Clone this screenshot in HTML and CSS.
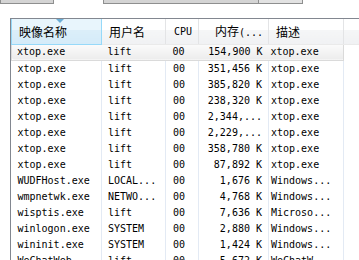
FILE: index.html
```html
<!DOCTYPE html>
<html lang="zh-CN">
<head>
    <meta charset="UTF-8">
    <title>任务管理器 - 进程</title>
    <link rel="stylesheet" href="styles.css">
</head>
<body>

    <div class="tabs">
        <span class="tab t1"></span>
        <span class="space s1"></span>
        <span class="tab t2"></span>
        <span class="tab t3"></span>
    </div>

    <div class="list">
        <table>
            <colgroup>
                <col class="c1"><col class="c2"><col class="c3"><col class="c4"><col class="c5"><col>
            </colgroup>
            <thead>
                <tr>
                    <th class="sorted"><span class="arrow"></span>映像名称</th>
                    <th>用户名</th>
                    <th class="mono cpu">CPU</th>
                    <th class="mem">内存<span class="mono">(...</span></th>
                    <th class="desc">描述</th>
                    <th class="fill"></th>
                </tr>
            </thead>
            <tbody>
                <tr class="sel"><td>xtop.exe</td><td>lift</td><td>00</td><td class="num">154,900 K</td><td class="last">xtop.exe</td><td class="fill"></td></tr>
                <tr><td>xtop.exe</td><td>lift</td><td>00</td><td class="num">351,456 K</td><td>xtop.exe</td><td class="fill"></td></tr>
                <tr><td>xtop.exe</td><td>lift</td><td>00</td><td class="num">385,820 K</td><td>xtop.exe</td><td class="fill"></td></tr>
                <tr><td>xtop.exe</td><td>lift</td><td>00</td><td class="num">238,320 K</td><td>xtop.exe</td><td class="fill"></td></tr>
                <tr><td>xtop.exe</td><td>lift</td><td>00</td><td class="num">2,344,...</td><td>xtop.exe</td><td class="fill"></td></tr>
                <tr><td>xtop.exe</td><td>lift</td><td>00</td><td class="num">2,229,...</td><td>xtop.exe</td><td class="fill"></td></tr>
                <tr><td>xtop.exe</td><td>lift</td><td>00</td><td class="num">358,780 K</td><td>xtop.exe</td><td class="fill"></td></tr>
                <tr><td>xtop.exe</td><td>lift</td><td>00</td><td class="num">87,892 K</td><td>xtop.exe</td><td class="fill"></td></tr>
                <tr><td>WUDFHost.exe</td><td>LOCAL...</td><td>00</td><td class="num">1,676 K</td><td>Windows...</td><td class="fill"></td></tr>
                <tr><td>wmpnetwk.exe</td><td>NETWO...</td><td>00</td><td class="num">4,768 K</td><td>Windows...</td><td class="fill"></td></tr>
                <tr><td>wisptis.exe</td><td>lift</td><td>00</td><td class="num">7,636 K</td><td>Microso...</td><td class="fill"></td></tr>
                <tr><td>winlogon.exe</td><td>SYSTEM</td><td>00</td><td class="num">2,880 K</td><td>Windows...</td><td class="fill"></td></tr>
                <tr><td>wininit.exe</td><td>SYSTEM</td><td>00</td><td class="num">1,424 K</td><td>Windows...</td><td class="fill"></td></tr>
                <tr><td>WeChatWeb...</td><td>lift</td><td>00</td><td class="num">5,672 K</td><td>WeChatW...</td><td class="fill"></td></tr>
            </tbody>
        </table>
    </div>

</body>
</html>
```

FILE: styles.css
```css
*{
    padding: 0;
    margin: 0;
    box-sizing: border-box;
}
body{
    background: #fff;
    width: 359px;
    height: 260px;
    overflow: hidden;
    font-family: "DejaVu Sans Mono", "Noto Sans CJK SC", monospace;
    font-size: 10px;
    color: #000;
}

/*上方按钮的底边*/
.tabs{
    display: flex;
    height: 4px;
}
.tab{
    display: block;
    height: 4px;
    background: #d4d4d4;
    border: 1px solid #8e8f8f;
    border-top: none;
}
.t1{
    width: 54px;
}
.s1{
    width: 49px;
}
.t2{
    width: 156px;
}
.t3{
    width: 45px;
    margin-left: -1px;
    background: #e2e2e2;
}

.list{
    margin: 14px 0 0 10px;
    border-top: 1px solid #828790;
    border-left: 1px solid #828790;
    height: 242px;
    overflow: hidden;
}
table{
    table-layout: fixed;
    border-collapse: collapse;
    width: 349px;
}
.c1{ width: 90px; }
.c2{ width: 64px; }
.c3{ width: 33px; }
.c4{ width: 70px; }
.c5{ width: 75px; }

th{
    height: 25px;
    font-family: "Noto Sans CJK SC", sans-serif;
    font-size: 12px;
    font-weight: normal;
    line-height: 14px;
    text-align: left;
    padding: 1px 0 0 7px;
    background: linear-gradient(#ffffff 0, #ffffff 45%, #f5f6f7 46%, #f0f1f3 100%);
    border-right: 1px solid #e3e4e6;
    border-bottom: 1px solid #eaeaea;
    white-space: nowrap;
    overflow: hidden;
    position: relative;
}
th.sorted{
    background: linear-gradient(#e8f5fc 0, #e8f5fc 45%, #dbeef9 46%, #d4ebf8 100%);
    border: 1px solid #96d9f9;
    border-top: none;
}
.arrow{
    position: absolute;
    top: 0;
    left: 44px;
    width: 0;
    height: 0;
    border-left: 4px solid transparent;
    border-right: 4px solid transparent;
    border-top: 4px solid #6caed6;
}
th.mono{
    font-family: "DejaVu Sans Mono", monospace;
    font-size: 10px;
    padding-left: 8px;
}
th.mem{
    padding-left: 16px;
}
th .mono{
    font-family: "DejaVu Sans Mono", monospace;
    font-size: 10px;
}
th.desc{
    padding-left: 7px;
}
th.fill{
    border-right: none;
}

td{
    height: 16px;
    line-height: 16px;
    padding: 0 0 0 6px;
    white-space: nowrap;
    overflow: hidden;
    border-right: 1px solid #e3eaf4;
}
td:nth-child(2){
    padding-left: 6px;
}
td:nth-child(3){
    padding-left: 7px;
}
td.num{
    text-align: right;
    padding: 0 6px 0 0;
}
td:nth-child(5){
    padding-left: 2px;
}
td.fill{
    border-right: none;
}

/*第一行的灰色高亮*/
tr.sel td{
    line-height: 14px;
    background: linear-gradient(#fbfbfb, #ececec);
    border-top: 1px solid #dadada;
    border-bottom: 1px solid #dadada;
    border-right: none;
}
tr.sel td:first-child{
    border-left: 1px solid #dadada;
    border-radius: 3px 0 0 3px;
    padding-left: 5px;
}
tr.sel td.last{
    border-right: 1px solid #dadada;
    border-radius: 0 3px 3px 0;
}
tr.sel td.fill{
    background: none;
    border: none;
}
```
